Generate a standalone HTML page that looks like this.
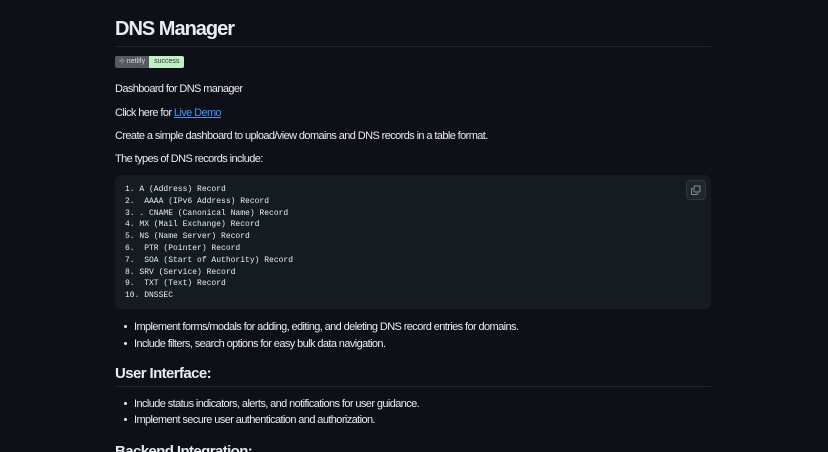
<!DOCTYPE html>
<html><head><meta charset="utf-8"><style>
*{margin:0;padding:0;box-sizing:border-box}
html,body{width:828px;height:452px;overflow:hidden;background:#0d1117;color:#e6edf3;font-family:"Liberation Sans",sans-serif}
#w{position:relative;width:828px;height:452px;overflow:hidden}
.a{position:absolute;white-space:nowrap}
p.a{font-size:11px;line-height:16px;letter-spacing:-0.6px}
h1{font-size:20px;font-weight:600;line-height:24px;letter-spacing:-1px}
h2{font-size:15px;font-weight:600;line-height:20px;letter-spacing:-0.6px}
.hr{position:absolute;left:115px;width:596px;height:1px;background:#21262d}
a{color:#4493f8;text-decoration:underline}
.code{position:absolute;left:115px;top:175px;width:596px;height:134px;background:#161b22;border-radius:6px}
pre{position:absolute;left:10px;top:9px;font-family:"Liberation Mono",monospace;font-size:8px;line-height:11.8px;color:#e6edf3}
.copy{position:absolute;left:571px;top:5px;width:20px;height:20px;border:1px solid #30363d;border-radius:4px;background:#21262d}
.dot{position:absolute;width:3px;height:3px;border-radius:50%;background:#e6edf3}
</style></head><body><div id="w">
<h1 class="a" style="left:115px;top:17px">DNS Manager</h1>
<div class="hr" style="top:46px"></div>
<div class="a" style="left:115px;top:56px;height:12px;font-size:7px;line-height:12px;border-radius:2px;overflow:hidden;display:flex">
<span style="background:#555a60;color:#ddd;padding:0 4px">⊹ netlify</span><span style="background:#c2f0c6;color:#333;padding:0 5px">success</span></div>
<p class="a" style="left:115px;top:81px">Dashboard for DNS manager</p>
<p class="a" style="left:115px;top:105px">Click here for <a>Live Demo</a></p>
<p class="a" style="left:115px;top:128px">Create a simple dashboard to upload/view domains and DNS records in a table format.</p>
<p class="a" style="left:115px;top:151px">The types of DNS records include:</p>
<div class="code"><pre>1. A (Address) Record
2.  AAAA (IPv6 Address) Record
3. . CNAME (Canonical Name) Record
4. MX (Mail Exchange) Record
5. NS (Name Server) Record
6.  PTR (Pointer) Record
7.  SOA (Start of Authority) Record
8. SRV (Service) Record
9.  TXT (Text) Record
10. DNSSEC</pre>
<div class="copy"><svg width="18" height="18" viewBox="0 0 18 18" fill="none" stroke="#8b949e" stroke-width="1"><rect x="7" y="5" width="6" height="6" rx="1"/><path d="M6 7.5H5.5a1 1 0 0 0-1 1V12.5a1 1 0 0 0 1 1H9.5a1 1 0 0 0 1-1V12"/></svg></div></div>
<div class="dot" style="left:124px;top:325px"></div>
<p class="a" style="left:134px;top:319px">Implement forms/modals for adding, editing, and deleting DNS record entries for domains.</p>
<div class="dot" style="left:124px;top:342px"></div>
<p class="a" style="left:134px;top:336px">Include filters, search options for easy bulk data navigation.</p>
<h2 class="a" style="left:115px;top:364px">User Interface:</h2>
<div class="hr" style="top:386px"></div>
<div class="dot" style="left:124px;top:402px"></div>
<p class="a" style="left:134px;top:396px">Include status indicators, alerts, and notifications for user guidance.</p>
<div class="dot" style="left:124px;top:418px"></div>
<p class="a" style="left:134px;top:412px">Implement secure user authentication and authorization.</p>
<h2 class="a" style="left:115px;top:442px">Backend Integration:</h2>
</div></body></html>
